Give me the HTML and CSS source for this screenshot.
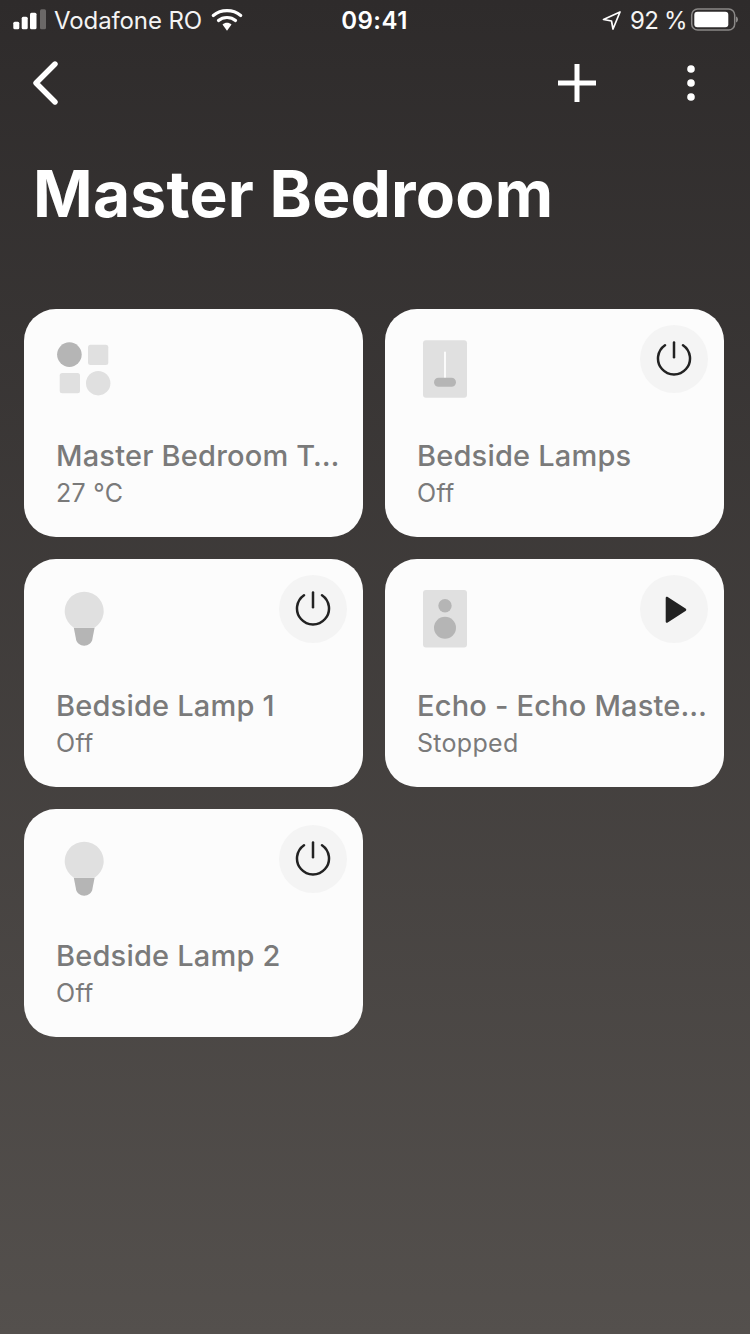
FILE: index.html
```html
<!DOCTYPE html>
<html lang="en">
<head>
<meta charset="utf-8">
<title>Master Bedroom</title>
<link rel="stylesheet" href="styles.css">
</head>
<body>
<div class="screen">
  <div class="status">
    <div class="status-left">
      <svg class="signal" width="36" height="24" viewBox="0 0 36 24"><rect x="1.300" y="13.700" width="6" height="7.600" rx="1.500" fill="#fff"/><rect x="9.700" y="8.700" width="6" height="12.600" rx="1.500" fill="#fff"/><rect x="18" y="4.700" width="6.500" height="16.600" rx="1.500" fill="#fff"/><rect x="28" y="1.300" width="6" height="20" rx="1.500" fill="#6b6867"/></svg>
      <span class="carrier">Vodafone RO</span>
      <svg class="wifi" width="32" height="24" viewBox="0 0 32 24"><path d="M2.300 7.500C10 1 22 1 29.700 7.500" fill="none" stroke="#fff" stroke-width="3.200" stroke-linecap="round"/><path d="M7.500 12.500C12 8.500 20 8.500 24.500 12.500" fill="none" stroke="#fff" stroke-width="3.200" stroke-linecap="round"/><path d="M11.500 16.500L16 22.700L20.500 16.500C18 14.300 14 14.300 11.500 16.500Z" fill="#fff"/></svg>
    </div>
    <div class="time">09:41</div>
    <div class="status-right">
      <svg class="loc" width="20" height="20" viewBox="0 0 20 20"><path d="M1.500 9.500L18 2L11 19L9.500 11Z" fill="none" stroke="#fff" stroke-width="1.700" stroke-linejoin="round"/></svg>
      <span class="pct">92 %</span>
      <svg class="battery" width="49" height="24" viewBox="0 0 49 24"><rect x="1.700" y="1" width="43" height="21" rx="6" fill="none" stroke="#8a8887" stroke-width="1.500"/><rect x="4.300" y="3.700" width="34" height="15.600" rx="3" fill="#fff"/><path d="M46 8.500C47.500 9 48 10.500 48 11.500C48 12.500 47.500 14 46 14.500Z" fill="#8a8887"/></svg>
    </div>
  </div>

  <div class="nav">
    <svg class="back" width="28" height="44" viewBox="0 0 28 44"><path d="M24 3L5 22L24 41" fill="none" stroke="#fff" stroke-width="5.400" stroke-linecap="round" stroke-linejoin="round"/></svg>
    <div class="nav-actions">
      <svg class="plus" width="40" height="40" viewBox="0 0 40 40"><path d="M20 1V39M1 20H39" fill="none" stroke="#fff" stroke-width="5"/></svg>
      <svg class="more" width="10" height="38" viewBox="0 0 10 38"><circle cx="5" cy="5" r="3.800" fill="#fff"/><circle cx="5" cy="19" r="3.800" fill="#fff"/><circle cx="5" cy="33" r="3.800" fill="#fff"/></svg>
    </div>
  </div>

  <h1 class="title">Master Bedroom</h1>

  <div class="grid">
    <div class="card">
      <svg class="icon" width="56" height="58" viewBox="0 0 56 58"><circle cx="12.400" cy="14.600" r="12.300" fill="#b5b5b5"/><rect x="31" y="4.700" width="20.300" height="20.300" rx="2.500" fill="#e0e0e0"/><rect x="2.700" y="33" width="20.300" height="20.300" rx="2.500" fill="#e0e0e0"/><circle cx="41.200" cy="43.200" r="12.200" fill="#e0e0e0"/></svg>
      <div class="name">Master Bedroom T…</div>
      <div class="state">27 °C</div>
    </div>

    <div class="card">
      <svg class="icon" width="56" height="58" viewBox="0 0 56 58"><rect x="5" y="0.300" width="44" height="57.400" rx="3" fill="#e0e0e0"/><rect x="26" y="11.700" width="2" height="28" fill="#fbfbfb"/><rect x="16" y="37.700" width="22" height="9" rx="4.500" fill="#b5b5b5"/></svg>
      <div class="name">Bedside Lamps</div>
      <div class="state">Off</div>
      <button class="action"><svg width="36" height="36" viewBox="0 0 36 36"><path d="M9 4.200A16 16 0 1 0 27 4.200" fill="none" stroke="#222" stroke-width="2.500" stroke-linecap="round"/><path d="M18 1.500V16.300" fill="none" stroke="#222" stroke-width="2.500" stroke-linecap="round"/></svg></button>
    </div>

    <div class="card">
      <svg class="icon" width="56" height="58" viewBox="0 0 56 58"><path d="M16.800 37.700H37.600L35.500 48.500C34.700 58 19.700 58 18.900 48.500Z" fill="#b5b5b5"/><path d="M16.800 37.700A19.500 19.500 0 1 1 37.600 37.700Z" fill="#e0e0e0"/></svg>
      <div class="name">Bedside Lamp 1</div>
      <div class="state">Off</div>
      <button class="action"><svg width="36" height="36" viewBox="0 0 36 36"><path d="M9 4.200A16 16 0 1 0 27 4.200" fill="none" stroke="#222" stroke-width="2.500" stroke-linecap="round"/><path d="M18 1.500V16.300" fill="none" stroke="#222" stroke-width="2.500" stroke-linecap="round"/></svg></button>
    </div>

    <div class="card">
      <svg class="icon" width="56" height="58" viewBox="0 0 56 58"><rect x="5" y="0" width="44" height="57.400" rx="3" fill="#e0e0e0"/><circle cx="27" cy="15.700" r="6.700" fill="#b5b5b5"/><circle cx="27" cy="37.700" r="11" fill="#b5b5b5"/></svg>
      <div class="name">Echo - Echo Maste…</div>
      <div class="state">Stopped</div>
      <button class="action"><svg width="36" height="36" viewBox="0 0 36 36"><path d="M9.700 7C9.700 6 10.700 5.400 11.700 6L29.500 17.600C30.500 18.300 30.500 19.500 29.500 20.100L11.700 31.500C10.700 32.100 9.700 31.500 9.700 30.500Z" fill="#222"/></svg></button>
    </div>

    <div class="card">
      <svg class="icon" width="56" height="58" viewBox="0 0 56 58"><path d="M16.800 37.700H37.600L35.500 48.500C34.700 58 19.700 58 18.900 48.500Z" fill="#b5b5b5"/><path d="M16.800 37.700A19.500 19.500 0 1 1 37.600 37.700Z" fill="#e0e0e0"/></svg>
      <div class="name">Bedside Lamp 2</div>
      <div class="state">Off</div>
      <button class="action"><svg width="36" height="36" viewBox="0 0 36 36"><path d="M9 4.200A16 16 0 1 0 27 4.200" fill="none" stroke="#222" stroke-width="2.500" stroke-linecap="round"/><path d="M18 1.500V16.300" fill="none" stroke="#222" stroke-width="2.500" stroke-linecap="round"/></svg></button>
    </div>
  </div>
</div>
</body>
</html>
```
FILE: styles.css
```css
* { box-sizing: border-box; }
html, body { margin: 0; padding: 0; }
body { font-family: Inter, "Liberation Sans", sans-serif; }
.screen {
  width: 750px;
  height: 1334px;
  overflow: hidden;
  background: linear-gradient(180deg, #2e2b2b 0%, #54504d 100%);
  color: #fff;
}
.status {
  height: 40px;
  padding: 0 11px 0 12px;
  display: grid;
  grid-template-columns: 1fr auto 1fr;
  align-items: center;
}
.status-left, .status-right { display: flex; align-items: center; }
.status-right { justify-content: flex-end; }
.signal { margin-right: 6px; }
.carrier { font-size: 24px; letter-spacing: -0.1px; color: #f4f4f4; }
.wifi { margin-left: 9px; }
.time { font-size: 24px; font-weight: 600; letter-spacing: 0.5px; margin-right: 2px; }
.loc { margin-right: 8px; }
.pct { font-size: 24px; letter-spacing: -0.7px; margin-right: 3px; color: #f4f4f4; }
.nav {
  height: 86px;
  padding: 0 54px 0 31px;
  display: flex;
  align-items: center;
  justify-content: space-between;
}
.nav-actions { display: flex; align-items: center; gap: 89px; }
.title {
  margin: 0;
  padding: 0 0 0 33px;
  height: 183px;
  font-size: 64px;
  line-height: 136px;
  font-weight: 700;
  letter-spacing: 0.25px;
  color: #fff;
}
.grid {
  padding: 0 26px 0 24px;
  display: grid;
  grid-template-columns: 339px 339px;
  grid-auto-rows: 228px;
  gap: 22px;
}
.card {
  position: relative;
  background: #fcfcfc;
  border-radius: 32px;
  padding: 31px 20px 0 32px;
}
.icon { display: block; margin-left: 1px; }
.name {
  margin-top: 40px;
  font-size: 29px;
  font-weight: 500;
  letter-spacing: 0.2px;
  line-height: 36px;
  color: #7a7a7a;
  white-space: nowrap;
}
.state {
  margin-top: 3px;
  font-size: 25px;
  letter-spacing: 0.3px;
  line-height: 33px;
  color: #7a7a7a;
}
.action {
  position: absolute;
  top: 16px;
  right: 16px;
  width: 68px;
  height: 68px;
  padding: 0;
  border: 0;
  border-radius: 50%;
  background: #f4f4f4;
  display: flex;
  align-items: center;
  justify-content: center;
}
```
